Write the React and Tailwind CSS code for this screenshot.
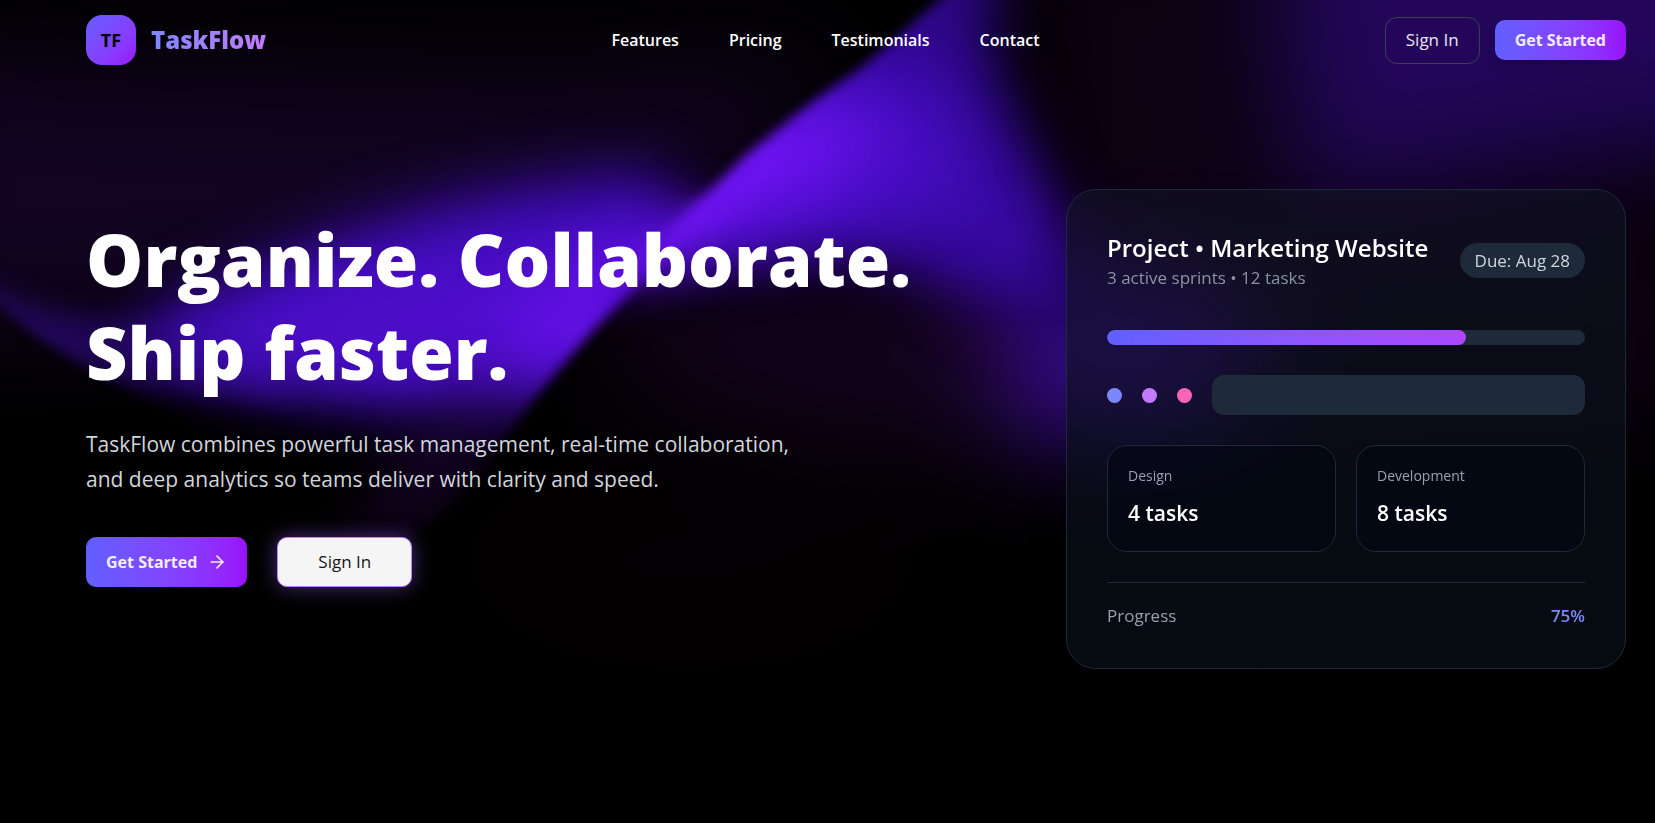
import { ArrowRight } from "lucide-react";

const navItems = ["Features", "Pricing", "Testimonials", "Contact"];

const stats = [
  { name: "Design", count: "4 tasks" },
  { name: "Development", count: "8 tasks" },
];

const blurs = [
  { id: "blur-edge", size: 6 },
  { id: "blur-sm", size: 14 },
  { id: "blur-md", size: 30 },
  { id: "blur-lg", size: 55 },
];

function Backdrop() {
  return (
    <svg
      className="absolute inset-0 h-full w-full"
      viewBox="0 0 1655 823"
      preserveAspectRatio="none"
      aria-hidden="true"
    >
      <defs>
        {blurs.map((b) => (
          <filter
            key={b.id}
            id={b.id}
            filterUnits="userSpaceOnUse"
            x="-300"
            y="-300"
            width="2255"
            height="1423"
            colorInterpolationFilters="sRGB"
          >
            <feGaussianBlur stdDeviation={b.size} />
          </filter>
        ))}
        <mask id="left-side" maskUnits="userSpaceOnUse" x="-100" y="-100" width="1855" height="1023">
          <path
            d="M-100 190 L0 305 C50 352 110 385 180 420 L300 640 C360 560 430 535 480 478 C515 425 540 390 595 329 L671 249 L715 205 L760 -100 L-100 -100 Z"
            fill="#fff"
            filter="url(#blur-edge)"
          />
        </mask>
        <mask id="right-side" maskUnits="userSpaceOnUse" x="-100" y="-100" width="1855" height="1023">
          <path
            d="M1060 -90 L939 0 L863 66 L813 101 L748 153 L694 205 L655 247 L590 315 L640 500 L1800 700 L1800 -100 Z"
            fill="#fff"
            filter="url(#blur-edge)"
          />
        </mask>
      </defs>
      <rect width="1655" height="823" fill="#000" />
      <g filter="url(#blur-lg)">
        <path d="M-100 50 L100 70 L560 80 L840 60 L700 230 L400 300 L-100 330 Z" fill="#120422" />
        <path d="M1260 -140 L1800 -140 L1800 130 L1500 170 L1290 195 Z" fill="#23065a" />
        <path d="M1040 -60 L1240 -60 L1240 190 L1700 200 L1700 420 L1100 440 Z" fill="#0e0214" />
        <path d="M600 300 L1080 230 L1200 450 L860 440 L640 390 Z" fill="#14031d" />
        <ellipse cx="1130" cy="365" rx="130" ry="80" fill="#400ea6" />
        <ellipse cx="690" cy="560" rx="220" ry="80" fill="#050003" />
      </g>
      <g mask="url(#left-side)">
        <path d="M-60 250 C10 310 80 330 220 310 L300 400 L130 385 L-60 340 Z" fill="#330a88" filter="url(#blur-sm)" opacity="0.6" />
        <path d="M150 315 C280 260 400 190 650 172 L740 270 L500 420 C400 410 260 400 150 355 Z" fill="#3d0bb4" filter="url(#blur-md)" />
        <path d="M210 330 C380 260 540 230 680 230 L560 375 C440 375 300 370 210 345 Z" fill="#4e0ecb" filter="url(#blur-md)" />
        <path d="M490 355 L540 290 L720 210 L640 330 L540 370 Z" fill="#6611e8" filter="url(#blur-md)" />
        <path d="M620 280 L700 205 L720 230 L640 310 Z" fill="#6611e8" filter="url(#blur-sm)" />
        <path d="M400 430 L530 370 L460 500 L350 570 Z" fill="#1d0533" filter="url(#blur-md)" opacity="0.7" />
      </g>
      <g mask="url(#right-side)">
        <path d="M880 -80 L1000 -80 L990 60 L1050 200 L1110 330 L1000 315 L860 245 L640 262 L560 260 L780 60 Z" fill="#2d0786" filter="url(#blur-md)" />
        <path d="M860 60 L940 50 L1060 270 L860 245 L640 262 L560 260 L780 60 Z" fill="#3e0ab2" filter="url(#blur-md)" opacity="0.8" />
        <path d="M640 250 L760 90 L900 85 L960 180 L850 225 Z" fill="#4b0ec8" filter="url(#blur-md)" />
        <path d="M600 290 L680 180 L770 115 L870 115 L830 180 L720 225 Z" fill="#6d13f0" filter="url(#blur-md)" />
        <path d="M620 285 L680 200 L760 145 L790 155 L700 228 Z" fill="#6d13f0" filter="url(#blur-sm)" />
      </g>
    </svg>
  );
}

export default function App() {
  return (
    <div className="relative min-h-screen overflow-hidden bg-black font-['Open_Sans','Noto_Sans',sans-serif] text-[17px] text-white">
      <Backdrop />
      <div className="relative pr-[29px] pl-[86px]">
        <header className="flex h-20 items-center justify-between">
          <a href="#home" className="flex items-center gap-[15px]">
            <span className="flex size-[50px] items-center justify-center rounded-2xl bg-linear-to-br from-indigo-500 to-purple-600 text-lg font-bold text-black">
              TF
            </span>
            <span className="bg-linear-to-r from-indigo-400 to-purple-400 bg-clip-text text-2xl font-extrabold text-transparent">
              TaskFlow
            </span>
          </a>
          <nav className="flex gap-[50px] text-base font-semibold">
            {navItems.map((item) => (
              <a key={item} href={"#" + item.toLowerCase()}>{item}</a>
            ))}
          </nav>
          <div className="flex items-center gap-[15px]">
            <button type="button" className="h-[47px] rounded-xl border border-gray-700 px-5 text-white/90">
              Sign In
            </button>
            <button type="button" className="h-10 rounded-[10px] bg-linear-to-r from-indigo-500 to-purple-600 px-5 text-base font-bold text-white/90 shadow-lg">
              Get Started
            </button>
          </div>
        </header>

        <main className="flex items-start justify-between gap-10 pt-[109px]">
          <section className="pt-6">
            <h1 className="text-[72px] leading-[93px] font-extrabold">
              Organize. Collaborate.
              <br />
              Ship faster.
            </h1>
            <p className="mt-7 max-w-[740px] text-[21px] leading-[35px] text-gray-300">
              TaskFlow combines powerful task management, real-time collaboration, and deep analytics so teams deliver
              with clarity and speed.
            </p>
            <div className="mt-10 flex gap-[30px]">
              <button type="button" className="flex h-[50px] items-center gap-[10px] rounded-[10px] bg-linear-to-r from-indigo-500 to-purple-600 px-5 text-base font-bold text-white/90">
                Get Started
                <ArrowRight size={20} strokeWidth={2} />
              </button>
              <button type="button" className="h-[50px] rounded-[10px] border border-purple-400 bg-neutral-100 px-10 font-medium text-neutral-900 shadow-[0_0_20px_rgba(139,92,246,0.5)]">
                Sign In
              </button>
            </div>
          </section>

          <section className="w-[560px] shrink-0 rounded-[30px] border border-gray-800 bg-linear-to-b from-[#111824]/50 to-[#070c14]/90 p-10 shadow-2xl backdrop-blur-xl">
            <div className="flex items-center justify-between">
              <div>
                <h2 className="text-2xl leading-[35px] font-semibold">Project • Marketing Website</h2>
                <p className="leading-[25px] text-gray-400/90">3 active sprints • 12 tasks</p>
              </div>
              <span className="rounded-full bg-gray-800 px-[15px] leading-[35px] text-gray-300">Due: Aug 28</span>
            </div>

            <div className="mt-10 h-[15px] overflow-hidden rounded-full bg-gray-800">
              <div className="h-full w-3/4 rounded-full bg-linear-to-r from-indigo-500 to-purple-500" />
            </div>

            <div className="mt-[30px] flex items-center gap-5">
              <span className="size-[15px] rounded-full bg-indigo-400" />
              <span className="size-[15px] rounded-full bg-purple-400" />
              <span className="size-[15px] rounded-full bg-pink-400" />
              <span className="h-10 flex-1 rounded-xl bg-gray-800" />
            </div>

            <div className="mt-[30px] grid grid-cols-2 gap-5">
              {stats.map((s) => (
                <div key={s.name} className="rounded-[20px] border border-gray-800 bg-[#030712]/60 p-5">
                  <p className="text-sm leading-5 text-gray-400">{s.name}</p>
                  <p className="mt-[10px] text-[21px] leading-[35px] font-semibold">{s.count}</p>
                </div>
              ))}
            </div>

            <div className="mt-[30px] flex justify-between border-t border-gray-800 pt-5 leading-[25px]">
              <span className="text-gray-400">Progress</span>
              <span className="font-semibold text-indigo-400">75%</span>
            </div>
          </section>
        </main>
      </div>
    </div>
  );
}
